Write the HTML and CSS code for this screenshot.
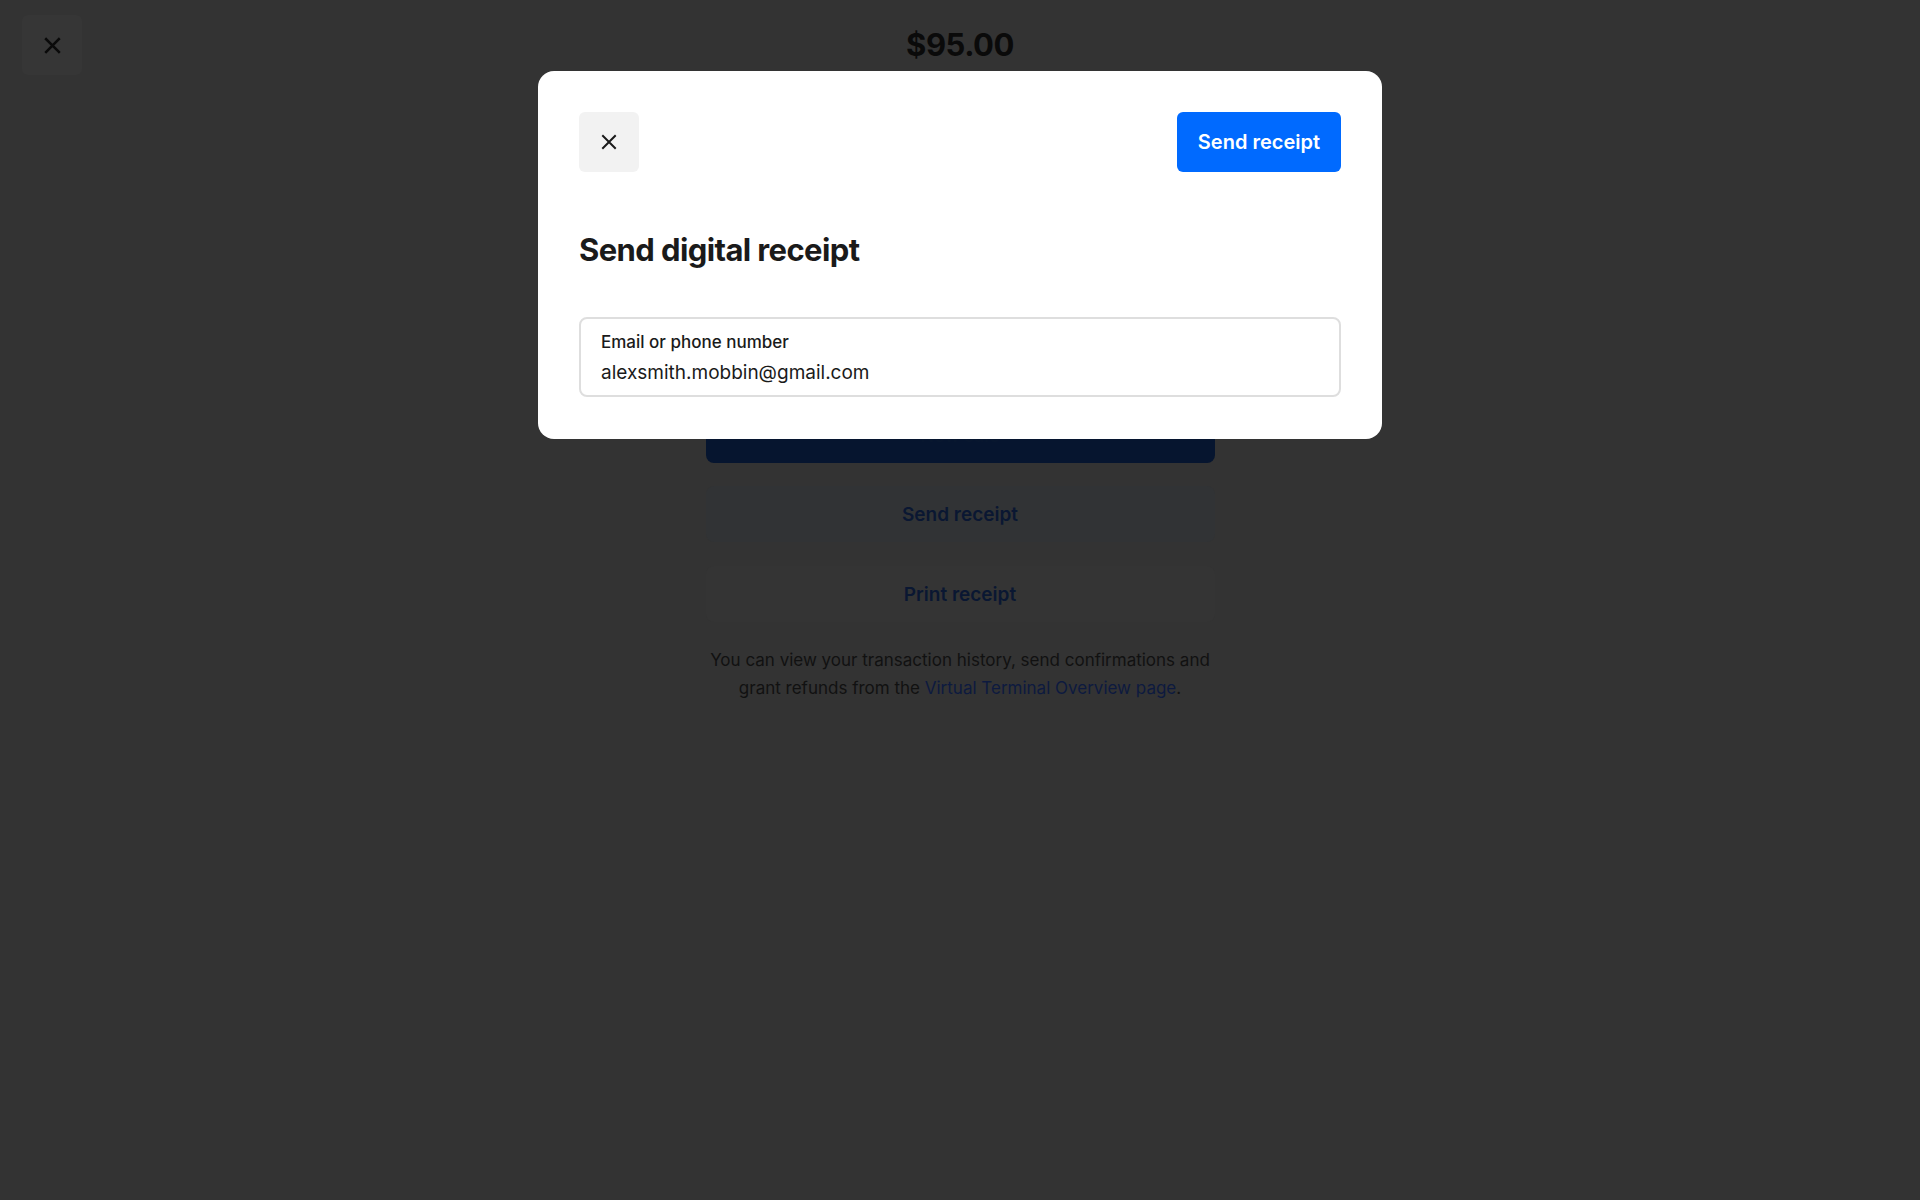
FILE: index.html
```html
<!DOCTYPE html>
<html lang="en">
<head>
    <meta charset="UTF-8">
    <meta name="viewport" content="width=device-width, initial-scale=1.0">
    <title>Send digital receipt</title>
    <link rel="stylesheet" href="styles.css">
</head>
<body>

    <!-- Page behind the dialog (dimmed) -->
    <div class="page">
        <div class="page-close">
            <svg width="17" height="17" viewBox="0 0 16 16"><path d="M2 2L14 14M14 2L2 14" stroke="currentColor" stroke-width="2.4" stroke-linecap="square"/></svg>
        </div>
        <div class="column">
            <div class="amount">$95.00</div>
            <div class="summary">
                <p>Payment complete</p>
            </div>
            <div class="btn-primary">New sale</div>
            <div class="btn-secondary">Send receipt</div>
            <div class="btn-secondary btn-light">Print receipt</div>
            <p class="note">You can view your transaction history, send confirmations and grant refunds from the <span class="link">Virtual Terminal Overview page</span>.</p>
        </div>
    </div>

    <!-- Dialog -->
    <div class="modal">
        <div class="modal-head">
            <div class="icon-button">
                <svg width="16" height="16" viewBox="0 0 16 16"><path d="M2 2L14 14M14 2L2 14" stroke="currentColor" stroke-width="2" stroke-linecap="square"/></svg>
            </div>
            <div class="send-button">Send receipt</div>
        </div>
        <h1 class="modal-title">Send digital receipt</h1>
        <div class="field">
            <div class="field-label">Email or phone number</div>
            <div class="field-value">alexsmith.mobbin@gmail.com</div>
        </div>
    </div>

</body>
</html>
```

FILE: styles.css
```css
body {
    margin: 0;
    background-color: #333333;
    font-family: Inter, "Noto Sans", sans-serif;
    min-height: 1200px;
}
.page {
    position: relative;
}
.page-close {
    position: absolute;
    left: 22px;
    top: 15px;
    width: 60px;
    height: 60px;
    border-radius: 6px;
    background-color: #363636;
    color: #0a0a0a;
    display: flex;
    align-items: center;
    justify-content: center;
}
.column {
    width: 509px;
    margin: 0 auto;
    padding-top: 20px;
    display: flex;
    flex-direction: column;
}
.amount {
    text-align: center;
    font-size: 31px;
    font-weight: 700;
    line-height: 50px;
    letter-spacing: -0.5px;
    color: #0a0a0a;
}
.summary {
    height: 337px;
    color: #111;
}
.summary p {
    margin: 0;
    text-align: center;
}
.btn-primary {
    height: 56px;
    border-radius: 8px;
    background-color: #06152f;
    color: #08172f;
    display: flex;
    align-items: center;
    justify-content: center;
    font-weight: 600;
    font-size: 18px;
    margin-bottom: 23px;
}
.btn-secondary {
    height: 56px;
    border-radius: 8px;
    background-color: #313335;
    color: #0a1732;
    display: flex;
    align-items: center;
    justify-content: center;
    font-weight: 600;
    font-size: 19px;
    margin-bottom: 24px;
}
.btn-light {
    background-color: #343434;
}
.note {
    margin: 0;
    text-align: center;
    font-size: 17px;
    line-height: 28px;
    color: #111111;
}
.link {
    color: #0d1a3f;
}
.modal {
    position: absolute;
    top: 71px;
    left: 50%;
    margin-left: -422px;
    width: 844px;
    box-sizing: border-box;
    padding: 41px 41px 42px 41px;
    background-color: #ffffff;
    border-radius: 16px;
}
.modal-head {
    display: flex;
    justify-content: space-between;
    align-items: center;
}
.icon-button {
    width: 60px;
    height: 60px;
    border-radius: 6px;
    background-color: #f2f2f2;
    color: #1a1a1a;
    display: flex;
    align-items: center;
    justify-content: center;
}
.send-button {
    height: 60px;
    padding: 0 21px;
    border-radius: 6px;
    background-color: #006aff;
    color: #ffffff;
    font-size: 20px;
    font-weight: 600;
    display: flex;
    align-items: center;
}
.modal-title {
    margin: 58px 0 47px 0;
    font-size: 31px;
    line-height: 40px;
    font-weight: 700;
    letter-spacing: -0.6px;
    color: #1a1a1a;
}
.field {
    height: 80px;
    box-sizing: border-box;
    border: 2px solid #dedede;
    border-radius: 8px;
    padding: 12px 20px 0 20px;
}
.field-label {
    font-size: 17px;
    font-weight: 500;
    line-height: 22px;
    color: #1a1a1a;
}
.field-value {
    margin-top: 5px;
    font-size: 19px;
    line-height: 30px;
    color: #1a1a1a;
}
```
